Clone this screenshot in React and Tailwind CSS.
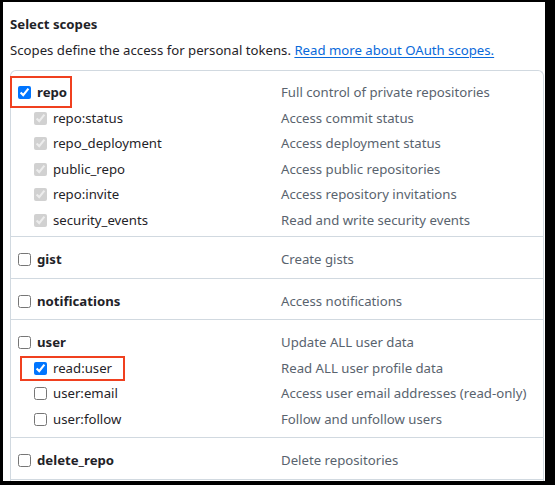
import React from 'react';

const GROUPS = [
  {
    name: 'repo',
    desc: 'Full control of private repositories',
    checked: true,
    highlight: true,
    children: [
      { name: 'repo:status', desc: 'Access commit status', checked: true, disabled: true },
      { name: 'repo_deployment', desc: 'Access deployment status', checked: true, disabled: true },
      { name: 'public_repo', desc: 'Access public repositories', checked: true, disabled: true },
      { name: 'repo:invite', desc: 'Access repository invitations', checked: true, disabled: true },
      { name: 'security_events', desc: 'Read and write security events', checked: true, disabled: true }
    ]
  },
  { name: 'gist', desc: 'Create gists', children: [] },
  { name: 'notifications', desc: 'Access notifications', children: [] },
  {
    name: 'user',
    desc: 'Update ALL user data',
    children: [
      { name: 'read:user', desc: 'Read ALL user profile data', checked: true, highlight: true },
      { name: 'user:email', desc: 'Access user email addresses (read-only)' },
      { name: 'user:follow', desc: 'Follow and unfollow users' }
    ]
  },
  { name: 'delete_repo', desc: 'Delete repositories', children: [] }
];

function ScopeLine({ item, top }) {
  return (
    <div className="relative flex h-[25.5px] items-center">
      <label className={`flex w-[263px] items-center ${top ? '' : 'pl-4'}`}>
        <input
          type="checkbox"
          defaultChecked={!!item.checked}
          disabled={!!item.disabled}
          className="m-0 h-[13px] w-[13px]"
        />
        <span className={`ml-[6px] ${top ? 'font-bold text-[#1f2328]' : 'text-[#1f2328]'}`}>{item.name}</span>
      </label>
      <span className="text-[#59636e]">{item.desc}</span>
      {item.highlight && top && (
        <div className="pointer-events-none absolute left-[-8px] top-[-4px] h-[32px] w-[62px] border-2 border-[#f0401f]" />
      )}
      {item.highlight && !top && (
        <div className="pointer-events-none absolute left-[2px] top-[0px] h-[25px] w-[105px] border-2 border-[#f0401f]" />
      )}
    </div>
  );
}

export default function App() {
  return (
    <div className="h-[485px] w-[555px] bg-black pl-[3px] pr-[10px] pt-[2px] pb-[4px]" style={{ fontFamily: '"Noto Sans", sans-serif' }}>
      <div className="h-full overflow-hidden bg-white pl-[7px] pr-[1px] text-[13.2px] leading-[21px]">
        <h3 className="pt-[12px] font-bold text-[#1f2328]">Select scopes</h3>
        <p className="mt-[5px] text-[#1f2328]">
          Scopes define the access for personal tokens.{' '}
          <a href="#" className="text-[#0969da] underline underline-offset-2">Read more about OAuth scopes.</a>
        </p>
        <div className="mt-[9px] rounded-t-md border border-b-0 border-[#d1d9e0]">
          {GROUPS.map((g, i) => (
            <div key={g.name} className={`pl-[7px] ${i === 0 ? 'pt-[9px] pb-[3px]' : 'pt-[10px] pb-[5px] border-t border-[#d1d9e0]'}`}>
              <ScopeLine item={g} top />
              {g.children.map((c) => (
                <ScopeLine key={c.name} item={c} />
              ))}
            </div>
          ))}
          <div className="border-t border-[#d1d9e0] h-[20px]" />
        </div>
      </div>
    </div>
  );
}
